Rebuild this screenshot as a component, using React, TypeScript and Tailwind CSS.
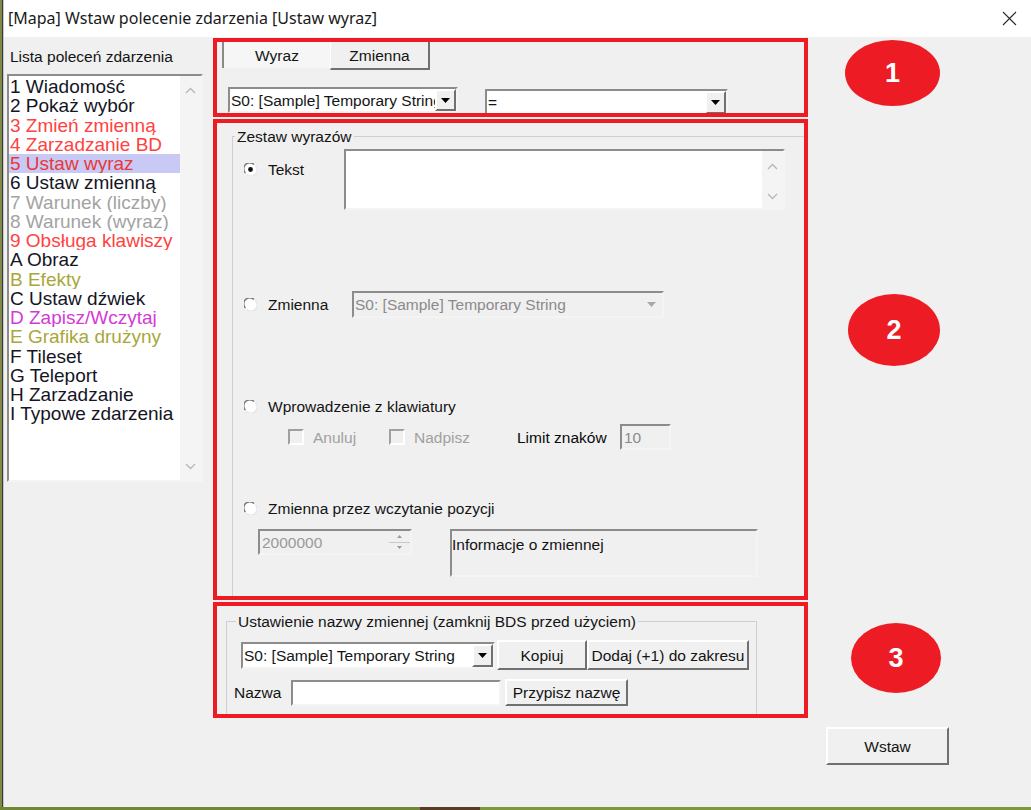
import React from 'react';

type Cmd = { label: string; color: string; selected?: boolean };

const commands: Cmd[] = [
  { label: '1 Wiadomość', color: 'text-[#151525]' },
  { label: '2 Pokaż wybór', color: 'text-[#151525]' },
  { label: '3 Zmień zmienną', color: 'text-[#ff4242]' },
  { label: '4 Zarzadzanie BD', color: 'text-[#ff4242]' },
  { label: '5 Ustaw wyraz', color: 'text-[#e83838]', selected: true },
  { label: '6 Ustaw zmienną', color: 'text-[#151525]' },
  { label: '7 Warunek (liczby)', color: 'text-[#a3a3a3]' },
  { label: '8 Warunek (wyraz)', color: 'text-[#a3a3a3]' },
  { label: '9 Obsługa klawiszy', color: 'text-[#ff4242]' },
  { label: 'A Obraz', color: 'text-[#151525]' },
  { label: 'B Efekty', color: 'text-[#a7a73c]' },
  { label: 'C Ustaw dźwiek', color: 'text-[#151525]' },
  { label: 'D Zapisz/Wczytaj', color: 'text-[#d43ad4]' },
  { label: 'E Grafika drużyny', color: 'text-[#a7a73c]' },
  { label: 'F Tileset', color: 'text-[#151525]' },
  { label: 'G Teleport', color: 'text-[#151525]' },
  { label: 'H Zarzadzanie', color: 'text-[#151525]' },
  { label: 'I Typowe zdarzenia', color: 'text-[#151525]' },
];

const sunken =
  'border-2 border-t-[#8c8c8c] border-l-[#8c8c8c] border-b-[#f4f4f4] border-r-[#f4f4f4]';
const raised =
  'border-2 border-t-white border-l-white border-b-[#707070] border-r-[#707070]';

const Tri = ({ dim }: { dim?: boolean }) => (
  <svg width="9" height="5" viewBox="0 0 9 5">
    <path d="M0 0h9L4.5 5z" fill={dim ? '#a8a8a8' : '#000'} />
  </svg>
);

const Chevron = ({ up }: { up?: boolean }) => (
  <svg width="11" height="7" viewBox="0 0 11 7">
    <path
      d={up ? 'M1 6l4.5-4.5L10 6' : 'M1 1l4.5 4.5L10 1'}
      fill="none"
      stroke="#b8b8b8"
      strokeWidth="1.4"
    />
  </svg>
);

const Radio = ({ checked }: { checked?: boolean }) => (
  <svg width="13" height="13" viewBox="0 0 13 13" className="shrink-0">
    <circle cx="6.5" cy="6.5" r="6" fill="#fff" />
    <path d="M1.5 10A6 6 0 0 1 10 1.5" fill="none" stroke="#7a7a7a" strokeWidth="1.4" />
    <path d="M11.5 3A6 6 0 0 1 3 11.5" fill="none" stroke="#e6e6e6" strokeWidth="1.3" />
    {checked && <circle cx="6.5" cy="6.5" r="2.4" fill="#111" />}
  </svg>
);

const Check = () => (
  <span className="w-[16px] h-[16px] shrink-0 bg-[#f0f0f0] border-2 border-t-[#a0a0a0] border-l-[#a0a0a0] border-b-white border-r-white" />
);

const Combo = ({
  text,
  w,
  h,
  dim,
}: {
  text: string;
  w: string;
  h: string;
  dim?: boolean;
}) => (
  <div className={`${w} ${h} ${sunken} ${dim ? 'bg-[#f0f0f0]' : 'bg-white'} flex items-stretch`}>
    <div
      className={`flex-1 min-w-0 overflow-hidden whitespace-nowrap pl-[1px] flex items-center ${
        dim ? 'text-[#8a8a8a]' : 'text-[#141414]'
      }`}
    >
      {text}
    </div>
    <div className={`w-[21px] shrink-0 bg-[#f0f0f0] flex items-center justify-center ${dim ? '' : raised}`}>
      <Tri dim={dim} />
    </div>
  </div>
);

const Btn = ({ children, cls }: { children: React.ReactNode; cls: string }) => (
  <div className={`${cls} ${raised} bg-[#f0f0f0] flex items-center justify-center text-[#141414] whitespace-nowrap`}>
    {children}
  </div>
);

export default function App() {
  return (
    <div
      className="w-[1031px] h-[810px] overflow-hidden bg-[#f0f0f0] flex flex-col text-[15.5px] leading-[17px]"
      style={{ fontFamily: '"Liberation Sans", Arial, sans-serif' }}
    >
      <div className="h-[807px] flex">
        {/* window edge */}
        <div className="w-[4px] shrink-0 flex">
          <div className="w-[2px] bg-[#7f8a4a]" />
          <div className="w-[1px] bg-[#3a3a3a]" />
          <div className="w-[1px] bg-[#c8c8c8]" />
        </div>

        <div className="flex-1 flex flex-col">
          {/* title bar */}
          <div className="h-[37px] bg-white flex items-center justify-between pl-[4px] pr-[14px]">
            <span
              className="text-[16px] text-[#1a1a1a]"
              style={{ fontFamily: '"Noto Sans", "Open Sans", sans-serif' }}
            >
              [Mapa] Wstaw polecenie zdarzenia [Ustaw wyraz]
            </span>
            <svg width="15" height="15" viewBox="0 0 15 15">
              <path d="M1 1l13 13M14 1L1 14" stroke="#2a2a2a" strokeWidth="1.1" />
            </svg>
          </div>

          <div className="flex-1 flex">
            {/* command list */}
            <div className="w-[209px] shrink-0">
              <div className="h-[37px] pt-[11px] pl-[6px] text-[#141414]">Lista poleceń zdarzenia</div>
              <div className={`ml-[3px] w-[196px] h-[408px] bg-white ${sunken} flex`}>
                <div className="flex-1 min-w-0 pt-[1px] text-[19px] leading-[19.25px]">
                  {commands.map((c) => (
                    <div
                      key={c.label}
                      className={`pl-[1px] whitespace-nowrap overflow-hidden ${c.color} ${
                        c.selected ? 'bg-[#c9c9f6]' : ''
                      }`}
                    >
                      {c.label}
                    </div>
                  ))}
                </div>
                <div className="w-[21px] shrink-0 bg-[#f4f4f4] flex flex-col items-center justify-between pt-[11px] pb-[10px]">
                  <Chevron up />
                  <Chevron />
                </div>
              </div>
            </div>

            {/* middle */}
            <div className="w-[595px] shrink-0 pt-[1px] flex flex-col gap-[2px]">
              {/* section 1 */}
              <div className="h-[79px] border-4 border-[#ed1c24] overflow-hidden">
                <div className="flex items-start">
                  <div className="ml-[5px] w-[108px] h-[26px] border-l-2 border-l-[#8a8a8a] bg-[#f6f6f6] flex items-center justify-center text-[#141414]">
                    Wyraz
                  </div>
                  <div className="w-[100px] h-[28px] border-l border-l-white border-r-2 border-b-2 border-r-[#707070] border-b-[#707070] flex items-center justify-center text-[#141414]">
                    Zmienna
                  </div>
                </div>
                <div className="flex items-start mt-[17px]">
                  <div className="ml-[11px]">
                    <Combo text="S0: [Sample] Temporary String" w="w-[230px]" h="h-[26px]" />
                  </div>
                  <div className="ml-[27px] mt-[2px]">
                    <Combo text="=" w="w-[243px]" h="h-[27px]" />
                  </div>
                </div>
              </div>

              {/* section 2 */}
              <div className="h-[481px] border-4 border-[#ed1c24] overflow-hidden">
                <fieldset className="ml-[15px] mt-[5px] w-[600px] h-[500px] border-t border-l border-[#cfcfcf]">
                  <legend className="ml-[2px] px-[2px] text-[#141414]">Zestaw wyrazów</legend>
                  <div className="flex items-start mt-[4px]">
                    <div className="w-[111px] shrink-0 pl-[11px] pt-[12px] flex items-center gap-[11px]">
                      <Radio checked />
                      <span className="text-[#141414]">Tekst</span>
                    </div>
                    <div className={`w-[441px] h-[61px] bg-white ${sunken} flex`}>
                      <div className="flex-1" />
                      <div className="w-[21px] bg-[#f4f4f4] flex flex-col items-center justify-between pt-[12px] pb-[8px]">
                        <Chevron up />
                        <Chevron />
                      </div>
                    </div>
                  </div>

                  <div className="flex items-center mt-[81px]">
                    <div className="w-[119px] shrink-0 pl-[11px] flex items-center gap-[11px]">
                      <Radio />
                      <span className="text-[#141414]">Zmienna</span>
                    </div>
                    <Combo text="S0: [Sample] Temporary String" w="w-[312px]" h="h-[27px]" dim />
                  </div>

                  <div className="flex items-center mt-[80px] pl-[11px] gap-[11px]">
                    <Radio />
                    <span className="text-[#141414]">Wprowadzenie z klawiatury</span>
                  </div>

                  <div className="flex items-center mt-[9px] h-[26px]">
                    <div className="ml-[55px] w-[101px] shrink-0 flex items-center gap-[9px] text-[#a0a0a0]">
                      <Check />
                      Anuluj
                    </div>
                    <div className="w-[128px] shrink-0 flex items-center gap-[9px] text-[#a0a0a0]">
                      <Check />
                      Nadpisz
                    </div>
                    <div className="w-[103px] shrink-0 text-[#0a0a0a]">Limit znaków</div>
                    <div className={`w-[51px] h-[26px] ${sunken} bg-[#f0f0f0] text-[#8a8a8a] pl-[2px] flex items-center`}>
                      10
                    </div>
                  </div>

                  <div className="flex items-center mt-[50px] pl-[11px] gap-[11px]">
                    <Radio />
                    <span className="text-[#141414]">Zmienna przez wczytanie pozycji</span>
                  </div>

                  <div className="flex items-start mt-[12px]">
                    <div className={`ml-[25px] w-[154px] h-[26px] ${sunken} bg-[#f0f0f0] flex`}>
                      <div className="flex-1 pl-[2px] flex items-center text-[#9a9a9a]">2000000</div>
                      <div className="w-[21px] flex flex-col">
                        <div className="flex-1 border-b border-[#c8c8c8] flex items-center justify-center">
                          <svg width="5" height="3" viewBox="0 0 5 3"><path d="M0 3L2.5 0L5 3z" fill="#9a9a9a" /></svg>
                        </div>
                        <div className="flex-1 flex items-center justify-center">
                          <svg width="5" height="3" viewBox="0 0 5 3"><path d="M0 0h5L2.5 3z" fill="#9a9a9a" /></svg>
                        </div>
                      </div>
                    </div>
                    <div className={`ml-[38px] w-[308px] h-[48px] ${sunken} text-[#141414] pt-[5px]`}>
                      Informacje o zmiennej
                    </div>
                  </div>
                </fieldset>
              </div>

              {/* section 3 */}
              <div className="h-[116px] border-4 border-[#ed1c24] overflow-hidden">
                <fieldset className="ml-[9px] mt-[7px] w-[531px] h-[120px] border-t border-l border-r border-[#cfcfcf]">
                  <legend className="ml-[9px] px-[2px] text-[#141414]">
                    Ustawienie nazwy zmiennej (zamknij BDS przed użyciem)
                  </legend>
                  <div className="flex items-center mt-[10px] ml-[14px]">
                    <Combo text="S0: [Sample] Temporary String" w="w-[254px]" h="h-[27px]" />
                    <Btn cls="ml-[2px] w-[90px] h-[30px]">Kopiuj</Btn>
                    <Btn cls="w-[162px] h-[30px]">Dodaj (+1) do zakresu</Btn>
                  </div>
                  <div className="flex items-center mt-[9px] ml-[7px]">
                    <span className="w-[57px] text-[#141414]">Nazwa</span>
                    <div className={`w-[210px] h-[26px] bg-white ${sunken}`} />
                    <Btn cls="ml-[4px] w-[123px] h-[27px]">Przypisz nazwę</Btn>
                  </div>
                </fieldset>
              </div>
            </div>

            {/* annotations + insert button */}
            <div className="flex-1 flex flex-col items-start pt-[3px]">
              <div className="ml-[37px] w-[95px] h-[66px] rounded-[50%] bg-[#ed1c24] flex items-center justify-center text-white font-bold text-[27px]">
                1
              </div>
              <div className="ml-[40px] mt-[188px] w-[92px] h-[72px] rounded-[50%] bg-[#ed1c24] flex items-center justify-center text-white font-bold text-[27px]">
                2
              </div>
              <div className="ml-[43px] mt-[257px] w-[90px] h-[70px] rounded-[50%] bg-[#ed1c24] flex items-center justify-center text-white font-bold text-[27px]">
                3
              </div>
              <Btn cls="ml-[18px] mt-[34px] w-[123px] h-[38px]">Wstaw</Btn>
            </div>
          </div>
        </div>
      </div>
      <div className="h-[3px] flex">
        <div className="w-[420px] bg-[#6f8a2e]" />
        <div className="w-[60px] bg-[#5a3a22]" />
        <div className="flex-1 bg-[#7c9a3a]" />
      </div>
    </div>
  );
}
